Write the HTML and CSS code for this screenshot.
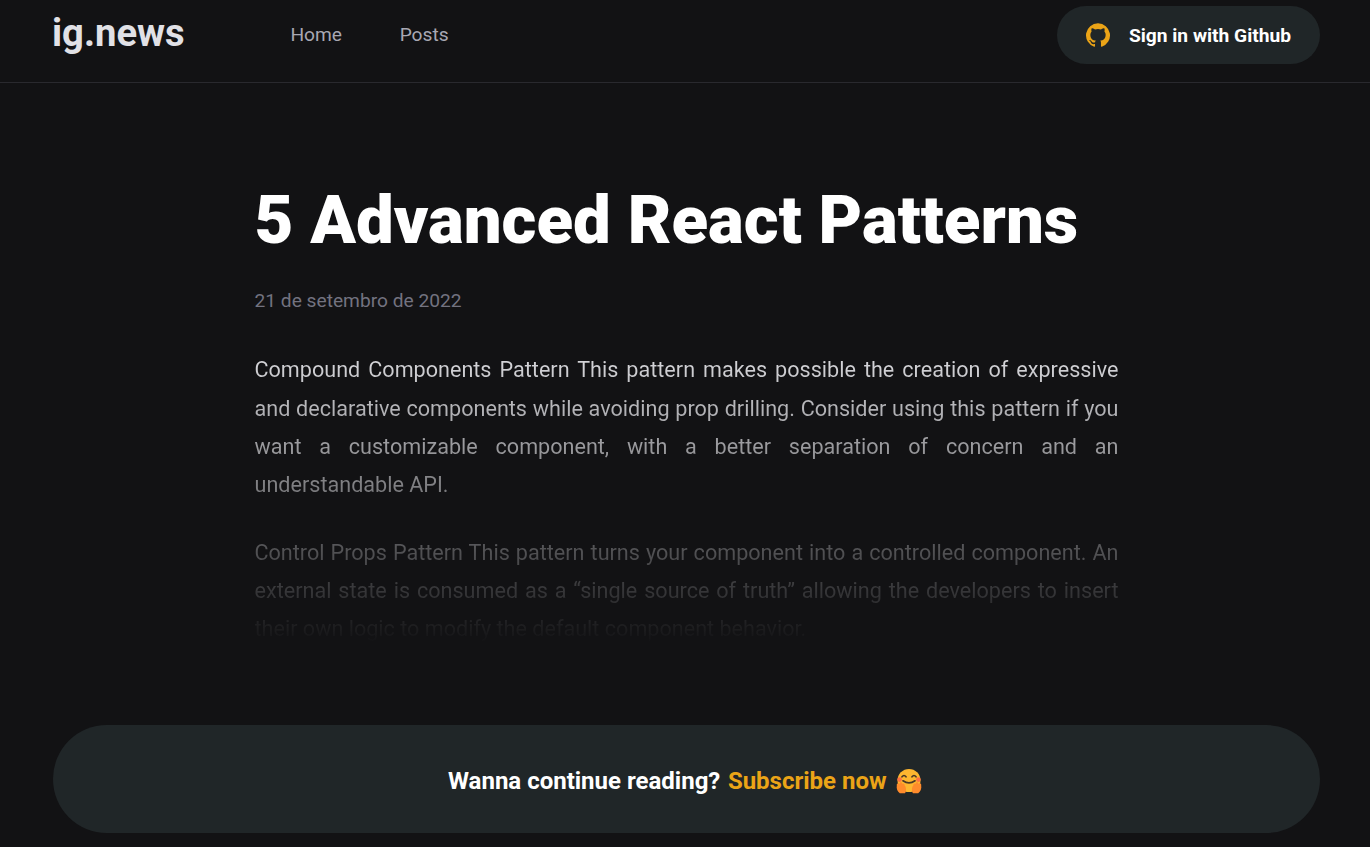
FILE: index.html
```html
<!DOCTYPE html>
<html lang="pt-BR">
<head>
<meta charset="utf-8">
<title>5 Advanced React Patterns | ig.news</title>
<link rel="stylesheet" href="styles.css">
</head>
<body>
<header class="header">
  <a class="logo">ig.news</a>
  <nav class="nav"><a>Home</a><a>Posts</a></nav>
  <button class="sign-in" type="button">
    <svg class="github" viewBox="0 0 24 24" aria-hidden="true"><path fill="#eba417" d="M12 .3a12 12 0 0 0-3.8 23.38c.6.11.82-.26.82-.58v-2.03c-3.34.72-4.04-1.61-4.04-1.61-.55-1.39-1.34-1.76-1.34-1.76-1.08-.74.09-.73.09-.73 1.2.08 1.83 1.24 1.83 1.24 1.07 1.83 2.8 1.3 3.49 1 .11-.78.42-1.31.76-1.61-2.66-.3-5.46-1.33-5.46-5.93 0-1.31.46-2.38 1.23-3.22-.12-.3-.54-1.52.12-3.18 0 0 1-.32 3.3 1.23a11.5 11.5 0 0 1 6 0c2.28-1.55 3.29-1.23 3.29-1.23.66 1.66.24 2.88.12 3.18.77.84 1.23 1.91 1.23 3.22 0 4.61-2.8 5.62-5.48 5.92.43.37.82 1.1.82 2.22v3.29c0 .32.21.7.82.58A12 12 0 0 0 12 .3"/></svg>
    <span>Sign in with Github</span>
  </button>
</header>
<main class="post">
  <h1 class="title">5 Advanced React Patterns</h1>
  <time class="date">21 de setembro de 2022</time>
  <div class="content">
    <p>Compound Components Pattern This pattern makes possible the creation of expressive and declarative components while avoiding prop drilling. Consider using this pattern if you want a customizable component, with a better separation of concern and an understandable API.</p>
    <p>Control Props Pattern This pattern turns your component into a controlled component. An external state is consumed as a “single source of truth” allowing the developers to insert their own logic to modify the default component behavior.</p>
  </div>
</main>
<aside class="cta">
  <span>Wanna continue reading?</span>
  <a class="subscribe">Subscribe now</a>
  <svg class="hug" viewBox="0 0 26 26" aria-hidden="true">
    <circle cx="13" cy="12.5" r="11.5" fill="#fdb62f"/>
    <circle cx="3.6" cy="11.6" r="2.3" fill="#ff7043"/><circle cx="22.4" cy="11.6" r="2.3" fill="#ff7043"/>
    <path d="M6 8.8q2-2.6 4 0M16 8.8q2-2.6 4 0M7 12.8q6 4.2 12 0" fill="none" stroke="#4b3827" stroke-width="1.7" stroke-linecap="round"/>
    <path d="M.8 17.5c-.5-2 1.5-3.2 2.7-1.6.2-2 2.4-2 2.8-.2 1.5-.8 2.5.3 2.4 1.8 1.7 1.6 1.8 5.8.3 7.8H3.8C1.5 23.8.2 20.5.8 17.5Z" fill="#ff8b2c"/>
    <path d="M25.2 17.5c.5-2-1.5-3.2-2.7-1.6-.2-2-2.4-2-2.8-.2-1.5-.8-2.5.3-2.4 1.8-1.7 1.6-1.8 5.8-.3 7.8h5.2c2.3-1.5 3.6-4.8 3-7.8Z" fill="#ff8b2c"/>
  </svg>
</aside>
</body>
</html>
```
FILE: styles.css
```css
* { box-sizing: border-box; margin: 0; padding: 0; }
html { font-size: 19.2px; }
body { height: 847px; overflow: hidden; background: #121214; color: #fff; font-family: Roboto, sans-serif; }
.header { height: 83px; padding: 6px 50px 0 52px; border-bottom: 1px solid #29292e; display: flex; align-items: flex-start; }
.logo { width: 133px; padding-top: 5px; color: #e1e1e6; font-size: 38.2px; line-height: 45px; font-weight: 700; white-space: nowrap; }
.nav { display: flex; gap: 57.6px; margin-left: 105.4px; line-height: 57px; color: #a8a8b3; }
.sign-in { margin-left: auto; width: 263px; height: 58px; padding: 0 29px; display: flex; align-items: center; justify-content: space-between; border: 0; border-radius: 29px; background: #202628; color: #fff; font: 700 19.2px Roboto, sans-serif; white-space: nowrap; }
.github { width: 24px; height: 24px; }
.post { width: 864px; margin: 98px 251.5px 0 254.5px; }
.title { font-size: 67.2px; line-height: 79px; font-weight: 900; white-space: nowrap; }
.date { display: block; margin-top: 29px; line-height: 23px; color: #737380; }
.content { height: 292.75px; margin-top: 39.25px; font-size: 21.6px; line-height: 38.4px; color: #e1e1e6; text-align: justify; background: linear-gradient(#dcdce0, transparent); background-clip: text; -webkit-text-fill-color: transparent; }
.content p + p { margin-top: 28.8px; }
.cta { height: 108px; margin: 81px 50px 0 53px; padding: 4px 3px 0 0; border-radius: 54px; background: #202628; display: flex; align-items: center; justify-content: center; font-size: 24px; font-weight: 700; }
.subscribe { margin-left: 7.6px; color: #eba417; }
.hug { width: 26px; height: 26px; margin-left: 9.4px; }
```
